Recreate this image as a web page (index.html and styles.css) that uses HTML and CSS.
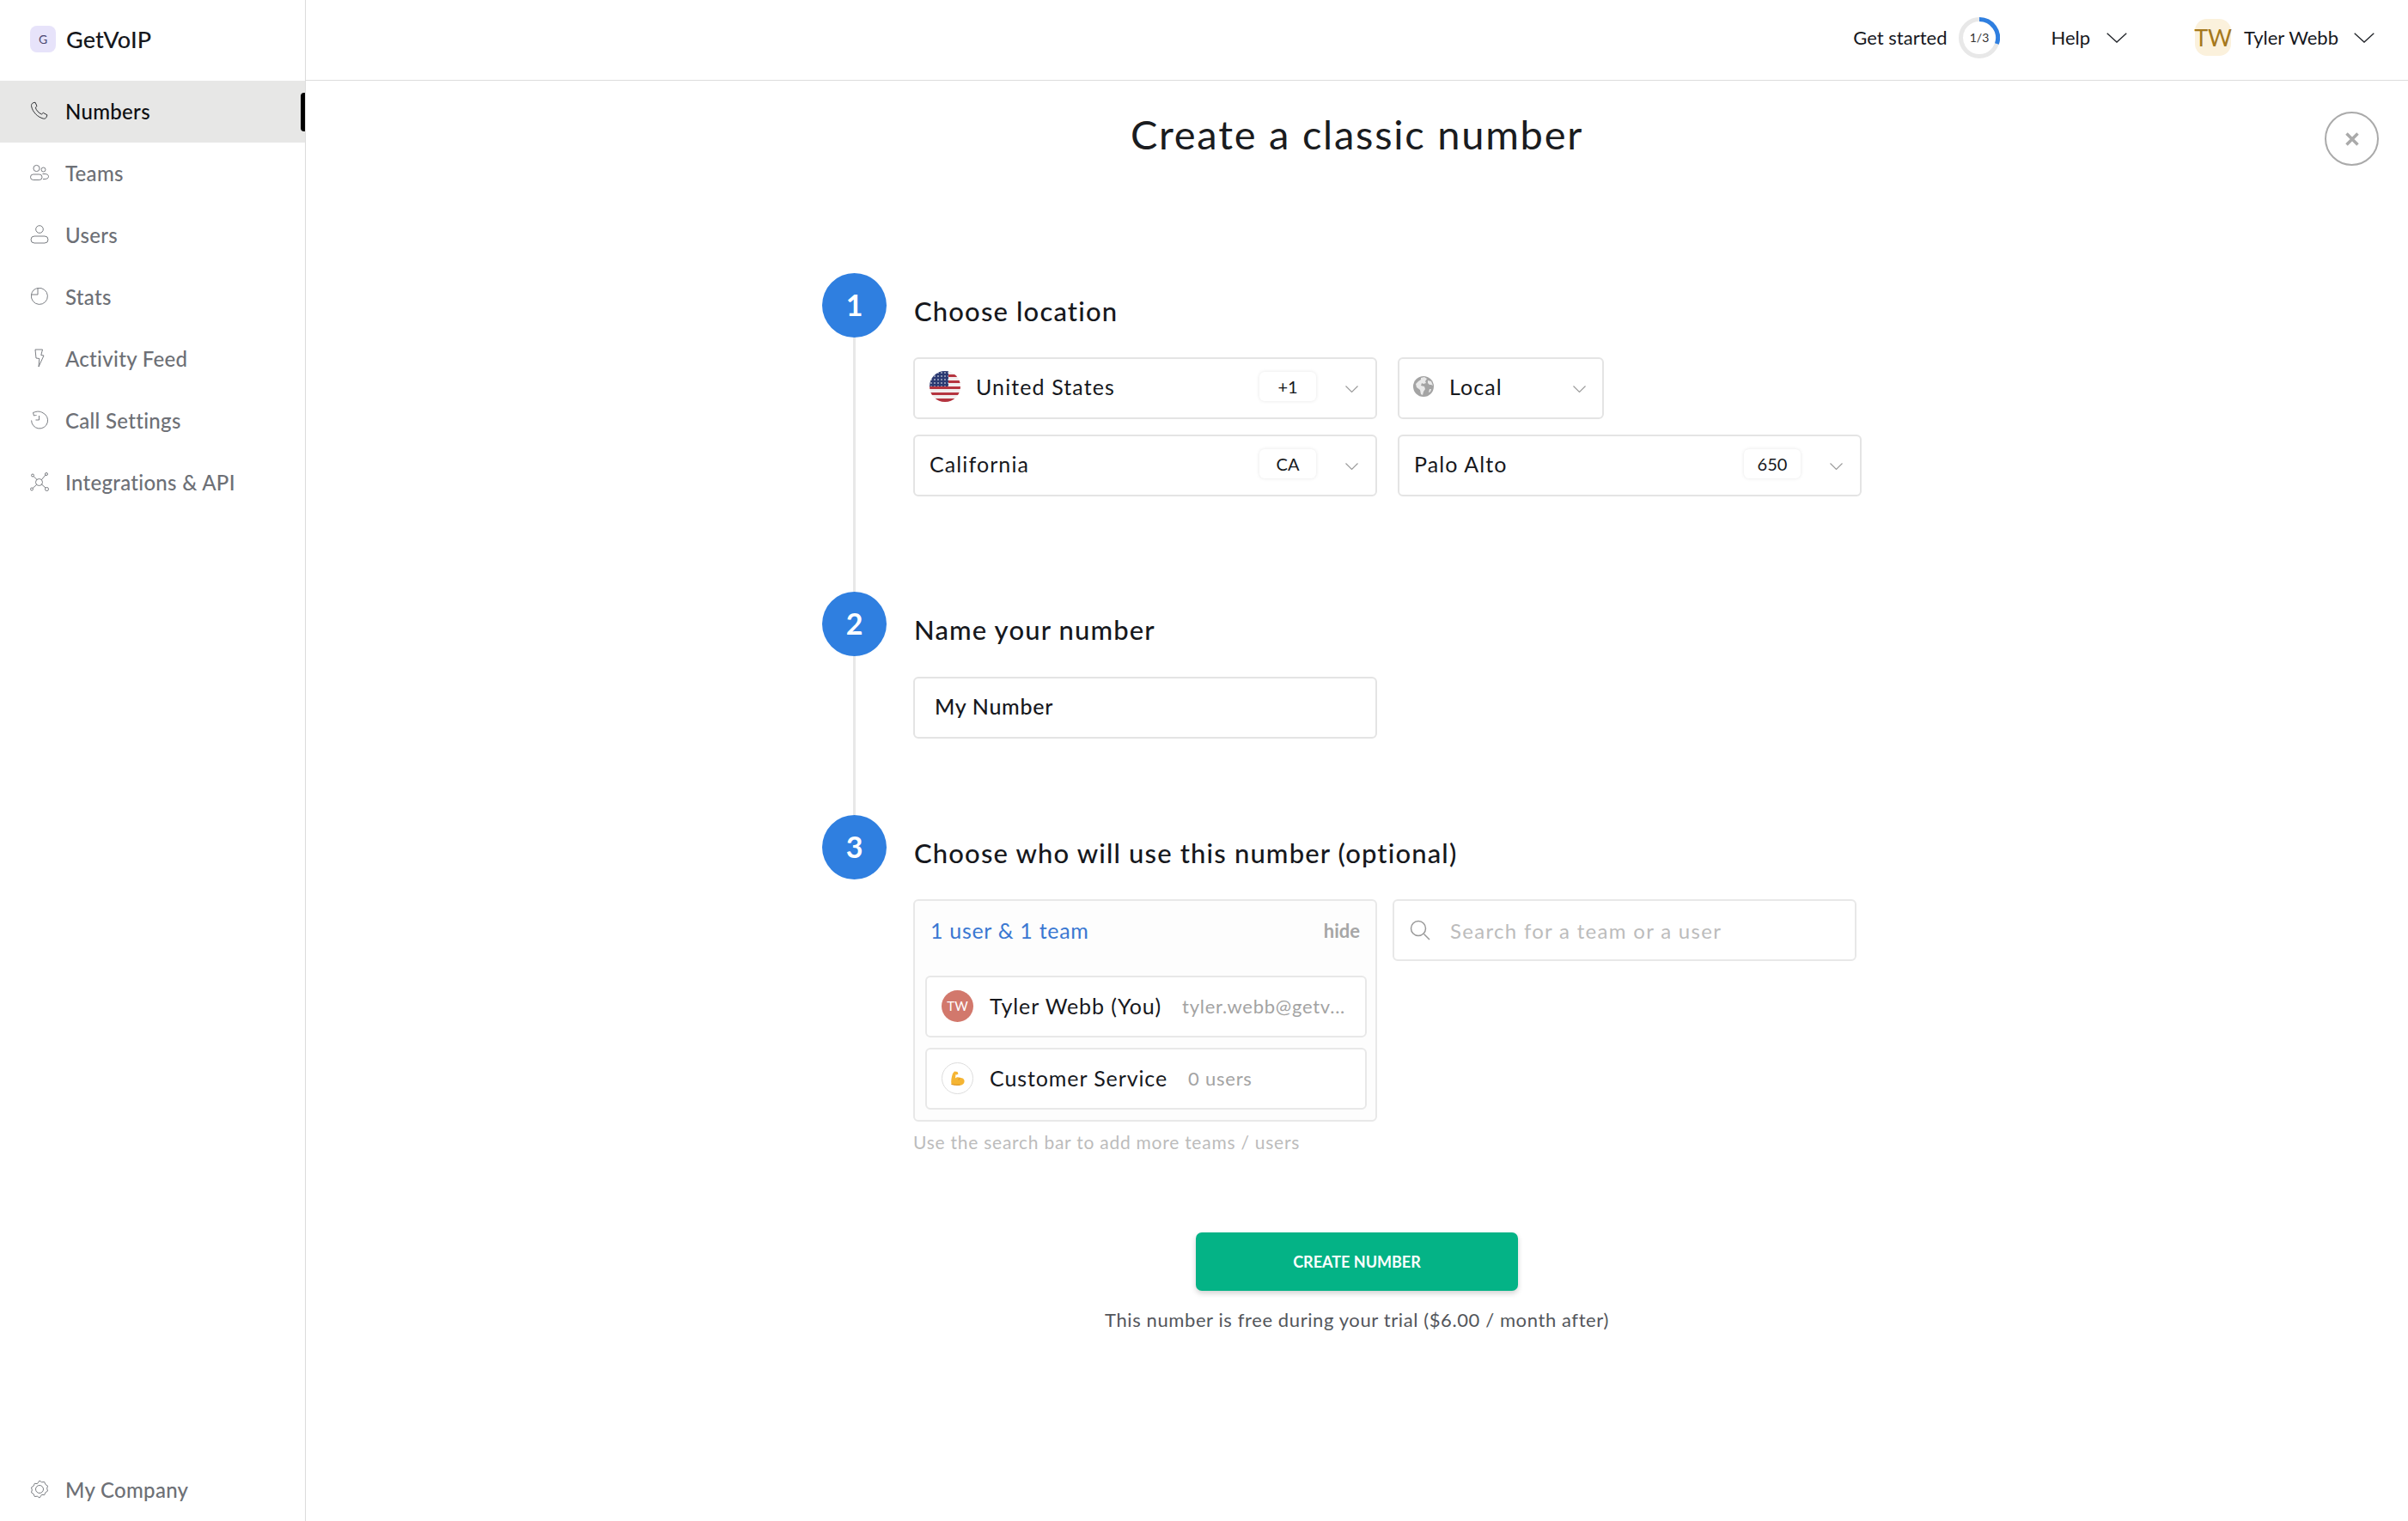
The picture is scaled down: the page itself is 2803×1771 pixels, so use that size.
FILE: index.html
```html
<!DOCTYPE html>
<html lang="en">
<head>
    <meta charset="UTF-8">
    <title>Create a classic number</title>
    <link rel="stylesheet" href="styles.css">
</head>
<body>
    <aside class="sidebar">
        <div class="logo">
            <span class="logo-mark">G</span>
            <span class="logo-name">GetVoIP</span>
        </div>
        <nav class="nav">
            <a class="nav-item active" href="#">
                <svg class="nav-icon" viewBox="0 0 22 22"><path d="M3.500 1.800 6 1.200 8 5.600 6.300 7.200c1 3.400 3.600 6.300 7.200 7.800l1.800-1.700 4.600 2.600-.9 2.600c-.5 1.300-2 2-3.600 1.600C8.700 18.300 3 12.500 1.600 5.800 1.300 4 2 2.400 3.500 1.800Z"/></svg>
                Numbers
            </a>
            <a class="nav-item" href="#">
                <svg class="nav-icon" viewBox="0 0 22 22"><circle cx="7.500" cy="6" r="3.600"/><circle cx="15.500" cy="7.500" r="2.500"/><rect x=".5" y="13" width="13.500" height="6.500" rx="3.200"/><path d="M14.500 12.500h2.500c2.500 0 4.500 1 4.500 3s-2 3-4.500 3h-2"/></svg>
                Teams
            </a>
            <a class="nav-item" href="#">
                <svg class="nav-icon" viewBox="0 0 22 22"><circle cx="11" cy="5" r="4.300"/><rect x="1" y="13" width="20" height="8" rx="4"/></svg>
                Users
            </a>
            <a class="nav-item" href="#">
                <svg class="nav-icon" viewBox="0 0 22 22"><path d="M9 1.600A9.500 9.500 0 1 1 1.600 9"/><path d="M9 1.600V9H1.600C2 5.200 5.200 2 9 1.600Z"/></svg>
                Stats
            </a>
            <a class="nav-item" href="#">
                <svg class="nav-icon" viewBox="0 0 22 22"><path d="M6 1h8.500l-1.700 6.500 3.200.5-6 13 .8-9.500-3.800-.5L6 1Z"/></svg>
                Activity Feed
            </a>
            <a class="nav-item" href="#">
                <svg class="nav-icon" viewBox="0 0 22 22"><path d="M3.500 2.500 4.500 6M3.500 2.500c5-2 8-1.800 11.500.3a9.500 9.500 0 1 1-13.400 8.700"/><path d="M4.500 6c-.5 0 1.500-.5 3-.5M10.500 6v5H6.500"/></svg>
                Call Settings
            </a>
            <a class="nav-item" href="#">
                <svg class="nav-icon" viewBox="0 0 22 22"><circle cx="10.500" cy="11.500" r="4"/><circle cx="3" cy="3.500" r="1.500"/><circle cx="19" cy="2" r="1.500"/><circle cx="2" cy="19.500" r="1.500"/><circle cx="19.500" cy="19.500" r="2"/><path d="m4 4.500 4 4M18 3l-4.500 5.500M3 18.500l4.500-4M18 18l-4.500-4"/></svg>
                Integrations &amp; API
            </a>
        </nav>
        <a class="nav-item nav-bottom" href="#">
            <svg class="nav-icon" viewBox="0 0 22 22"><path d="M11 1l2.600 1.800 3.100-.3 1.200 2.900 2.600 1.700-.8 3 .8 3-2.600 1.700-1.200 2.900-3.100-.3L11 21l-2.600-1.800-3.100.3-1.200-2.900-2.600-1.700.8-3-.8-3 2.600-1.700 1.200-2.900 3.100.3L11 1Z"/><circle cx="11" cy="11" r="4.500"/></svg>
            My Company
        </a>
    </aside>

    <div class="page">
        <header class="topbar">
            <span class="top-link">Get started</span>
            <svg class="ring" viewBox="0 0 48 48">
                <circle class="ring-track" cx="24" cy="24" r="21.500"/>
                <path class="ring-done" d="M24 2.500A21.500 21.500 0 0 1 44.400 31"/>
                <text class="ring-text" x="24" y="29" text-anchor="middle">1/3</text>
            </svg>
            <span class="top-link help">Help</span>
            <svg class="chevron-big" viewBox="0 0 24 12"><path d="M.7.7 12 11 23.300.7"/></svg>
            <span class="initials">TW</span>
            <span class="top-link">Tyler Webb</span>
            <svg class="chevron-big" viewBox="0 0 24 12"><path d="M.7.7 12 11 23.300.7"/></svg>
        </header>

        <main class="content">
            <h1 class="title">Create a classic number</h1>
            <button class="close" type="button">
                <svg viewBox="0 0 16 16"><path d="M1.500 1.500l13 13M14.500 1.500l-13 13"/></svg>
            </button>

            <div class="wizard">
                <section class="step step-location">
                    <div class="step-side"><span class="step-num">1</span><span class="step-line"></span></div>
                    <div class="step-body">
                        <h2>Choose location</h2>
                        <div class="row">
                            <div class="select wide">
                                <svg class="flag" viewBox="0 0 36 36">
                                    <defs>
                                        <clipPath id="flagClip"><circle cx="18" cy="18" r="18"/></clipPath>
                                        <pattern id="stars" width="4" height="4" patternUnits="userSpaceOnUse"><circle cx="2" cy="2" r=".8" fill="#fff"/></pattern>
                                    </defs>
                                    <g clip-path="url(#flagClip)">
                                        <rect width="36" height="36" fill="#f2eeee"/>
                                        <path d="M18 4h18v3H18zM18 11h18v3H18zM0 18h36v3H0zM0 25h36v3H0zM0 32h36v4H0z" fill="#b5343f"/>
                                        <rect width="22" height="18" fill="#2b3a72"/>
                                        <rect width="22" height="18" fill="url(#stars)"/>
                                    </g>
                                </svg>
                                <span class="value">United States</span>
                                <span class="badge">+1</span>
                                <svg class="chevron" viewBox="0 0 15 8"><path d="M.5.500l7 7 7-7"/></svg>
                            </div>
                            <div class="select narrow">
                                <svg class="globe" viewBox="0 0 24 24">
                                    <circle cx="12" cy="12" r="12" fill="#a4a4a4"/>
                                    <path d="M9 2 13 1l3 2-2 3 1 2-3 1-2-1-1 3 4 1 1 3-2 3-1 4-2-1-1-5-4-3-1-4 3-3 3-2ZM17 5l4 1 2 5-2-1-2 0-2-2ZM19 15l2 0-1 3-2 1Z" fill="#e9e9e9"/>
                                </svg>
                                <span class="value">Local</span>
                                <svg class="chevron" viewBox="0 0 15 8"><path d="M.5.500l7 7 7-7"/></svg>
                            </div>
                        </div>
                        <div class="row">
                            <div class="select wide">
                                <span class="value">California</span>
                                <span class="badge">CA</span>
                                <svg class="chevron" viewBox="0 0 15 8"><path d="M.5.500l7 7 7-7"/></svg>
                            </div>
                            <div class="select wide">
                                <span class="value">Palo Alto</span>
                                <span class="badge">650</span>
                                <svg class="chevron" viewBox="0 0 15 8"><path d="M.5.500l7 7 7-7"/></svg>
                            </div>
                        </div>
                    </div>
                </section>

                <section class="step step-name">
                    <div class="step-side"><span class="step-num">2</span><span class="step-line"></span></div>
                    <div class="step-body">
                        <h2>Name your number</h2>
                        <div class="select wide name-input">My Number</div>
                    </div>
                </section>

                <section class="step step-users">
                    <div class="step-side"><span class="step-num">3</span></div>
                    <div class="step-body">
                        <h2>Choose who will use this number (optional)</h2>
                        <div class="row users-row">
                            <div>
                                <div class="panel">
                                    <div class="panel-head">
                                        <span class="panel-count">1 user &amp; 1 team</span>
                                        <span class="panel-hide">hide</span>
                                    </div>
                                    <div class="member">
                                        <span class="avatar avatar-tw">TW</span>
                                        <span class="member-name">Tyler Webb (You)</span>
                                        <span class="member-info">tyler.webb@getv...</span>
                                    </div>
                                    <div class="member">
                                        <span class="avatar">
                                            <svg viewBox="0 0 17 17"><path d="M5 .5 8.500 1l1 2.500-2 1-1-.5-.5 4.500c1.500-1.500 4-1.700 5.500-.5 2-.5 4.500.5 5 3 .5 3-1.500 5.500-5 5.800-3.500.2-7.500-.3-10-1.300C.8 12 1.500 7 3 3Z" fill="#f5b533"/><path d="M11.500 8c-1 .6-1.500 1.500-1.500 2.500M1.500 15.500c3 .7 7 1 10 .5" fill="none" stroke="#d98f1f"/></svg>
                                        </span>
                                        <span class="member-name">Customer Service</span>
                                        <span class="member-info">0 users</span>
                                    </div>
                                </div>
                                <p class="hint">Use the search bar to add more teams / users</p>
                            </div>
                            <div class="select wide search">
                                <svg class="search-icon" viewBox="0 0 24 24"><circle cx="10" cy="10" r="8.500"/><path d="m16.500 16.500 6.500 6.500"/></svg>
                                <span class="placeholder">Search for a team or a user</span>
                            </div>
                        </div>
                    </div>
                </section>
            </div>

            <div class="actions">
                <button class="create" type="button">CREATE NUMBER</button>
                <p class="price-note">This number is free during your trial ($6.00 / month after)</p>
            </div>
        </main>
    </div>
</body>
</html>
```

FILE: styles.css
```css
* { box-sizing: border-box; }
html, body { height: 100%; }
body { margin: 0; display: flex; min-height: 1771px; font-family: "Lato", "Liberation Sans", sans-serif; color: #16181d; background: #fff; }
h1, h2, p { margin: 0; font-weight: 400; }
a { text-decoration: none; color: inherit; }

/* sidebar */
.sidebar { width: 356px; flex: none; display: flex; flex-direction: column; border-right: 1px solid #dcdcdc; }
.logo { height: 94px; padding: 0 0 4px 35px; display: flex; align-items: center; gap: 12px; }
.logo-mark { width: 30px; height: 31px; border-radius: 8px; background: #e7e3fa; color: #4a4670; font-size: 14px; display: flex; align-items: center; justify-content: center; }
.logo-name { font-size: 27px; font-weight: 500; letter-spacing: .2px; }
.nav { display: flex; flex-direction: column; }
.nav-item { position: relative; height: 72px; padding: 0 0 2px 35px; display: flex; align-items: center; gap: 19px; font-size: 24px; font-weight: 500; letter-spacing: .3px; color: #6d7076; }
.nav-icon { width: 22px; height: 22px; fill: none; stroke: #6d7076; stroke-width: .9; flex: none; }
.nav-item.active { background: #e7e7e6; color: #0e0f12; }
.nav-item.active .nav-icon { stroke: #1d1f23; }
.nav-item.active::after { content: ""; position: absolute; right: 0; top: 14px; width: 5px; height: 45px; background: #000; border-radius: 4px 0 0 4px; }
.nav-bottom { margin-top: auto; }

/* top bar */
.page { flex: 1; display: flex; flex-direction: column; min-width: 0; }
.topbar { height: 94px; flex: none; border-bottom: 1px solid #dcdcdc; display: flex; align-items: center; justify-content: flex-end; padding-right: 39px; padding-bottom: 6px; }
.top-link { font-size: 22px; color: #16181d; }
.ring { width: 48px; height: 48px; margin-left: 14px; fill: none; }
.ring-track { stroke: #e8e8e8; stroke-width: 5; }
.ring-done { stroke: #2f7fe0; stroke-width: 5; fill: none; }
.ring-text { fill: #333; font-size: 14px; font-family: "Lato", sans-serif; }
.help { margin-left: 59px; margin-right: 19px; }
.chevron-big { width: 24px; height: 12px; fill: none; stroke: #22252a; stroke-width: 1.300; }
.initials { width: 42px; height: 43px; margin-left: 79px; margin-right: 15px; border-radius: 14px; background: #fbf1dc; color: #a5781c; font-size: 27px; display: flex; align-items: center; justify-content: center; }
.top-link + .chevron-big { margin-left: 18px; }
.help + .chevron-big { margin-left: 0; }

/* main column */
.content { position: relative; flex: 1; }
.title { text-align: center; font-size: 47px; line-height: 56px; margin-top: 34px; letter-spacing: 1.750px; color: #1a1c20; }
.close { position: absolute; top: 36px; right: 34px; width: 63px; height: 63px; border-radius: 50%; border: 2px solid #aaa; background: #fff; padding: 0; display: flex; align-items: center; justify-content: center; }
.close svg { width: 16px; height: 16px; fill: none; stroke: #aaa; stroke-width: 3.500; }

.wizard { width: 1245px; margin: 134px auto 0; }
.step { display: flex; gap: 31px; }
.step-location { height: 371px; }
.step-name { height: 260px; }
.step-side { width: 75px; flex: none; display: flex; flex-direction: column; align-items: center; }
.step-num { width: 75px; height: 75px; flex: none; border-radius: 50%; background: #2f7fe0; color: #fff; font-size: 34px; font-weight: 700; display: flex; align-items: center; justify-content: center; padding-bottom: 2px; }
.step-line { width: 3px; flex: 1; background: #e8e8e8; }
.step-body { flex: 1; padding-top: 26px; }
.step-body h2 { font-size: 31px; line-height: 36px; margin-bottom: 36px; padding-left: 1px; letter-spacing: 1.150px; color: #16181d; font-weight: 500; }
.step-name h2 { margin-bottom: 37px; }

.row { display: flex; gap: 24px; margin-bottom: 18px; align-items: flex-start; }
.users-row { gap: 18px; }
.select { height: 72px; border: 2px solid #e4e4e4; border-radius: 6px; display: flex; align-items: center; padding: 0 20px 4px 17px; background: #fff; font-size: 25px; }
.select.wide { width: 540px; }
.select.narrow { width: 240px; padding-left: 16px; padding-right: 19px; }
.value { flex: 1; letter-spacing: 1.100px; color: #16181d; }
.flag { width: 36px; height: 36px; margin-right: 18px; flex: none; }
.globe { width: 24px; height: 24px; margin-right: 18px; flex: none; }
.badge { width: 66px; height: 34px; border-radius: 6px; background: #fff; box-shadow: 0 0 4px rgba(0, 0, 0, .1); font-size: 20px; display: flex; align-items: center; justify-content: center; margin-right: 34px; }
.chevron { width: 15px; height: 8px; flex: none; fill: none; stroke: #999; stroke-width: 1.100; margin-top: 6px; }
.name-input { font-size: 25px; font-weight: 500; padding-left: 23px; letter-spacing: .7px; }

.panel { width: 540px; height: 259px; border: 2px solid #e8e8e8; border-radius: 6px; background: #fdfdfd; padding: 0 10px 0 12px; }
.panel-head { height: 70px; margin-bottom: 17px; padding: 0 8px 2px 6px; display: flex; align-items: center; justify-content: space-between; }
.panel-count { font-size: 25px; color: #3a78d2; letter-spacing: .7px; }
.panel-hide { font-size: 22px; font-weight: 700; color: #a6a6a6; }
.member { height: 72px; border: 2px solid #e8e8e8; border-radius: 6px; background: #fff; display: flex; align-items: center; padding: 0 0 2px 17px; margin-bottom: 12px; }
.avatar { width: 37px; height: 37px; flex: none; border-radius: 50%; border: 1px solid #ddd; display: flex; align-items: center; justify-content: center; }
.avatar svg { width: 17px; height: 17px; }
.avatar-tw { background: #d2786c; border: none; color: #fff; font-size: 15px; }
.member-name { font-size: 25px; margin-left: 19px; letter-spacing: .9px; white-space: nowrap; }
.member-info { font-size: 22px; color: #a3a3a3; margin-left: 24px; white-space: nowrap; letter-spacing: .75px; }
.hint { font-size: 21px; color: #bcbcbc; margin-top: 11px; letter-spacing: .75px; }
.search { border-color: #e8e8e8; padding-left: 18px; padding-bottom: 0; }
.search-icon { width: 24px; height: 24px; fill: none; stroke: #999; stroke-width: 1.500; margin-right: 23px; flex: none; }
.placeholder { font-size: 24px; color: #bcbcbc; letter-spacing: 1.300px; }

.actions { display: flex; flex-direction: column; align-items: center; margin-top: 75px; }
.create { width: 375px; height: 68px; border: none; border-radius: 7px; background: #04b386; color: #fff; font-family: inherit; font-size: 18px; font-weight: 700; box-shadow: 0 3px 6px rgba(0, 0, 0, .18); }
.price-note { margin-top: 20px; font-size: 22px; color: #53565b; letter-spacing: .6px; }
```
